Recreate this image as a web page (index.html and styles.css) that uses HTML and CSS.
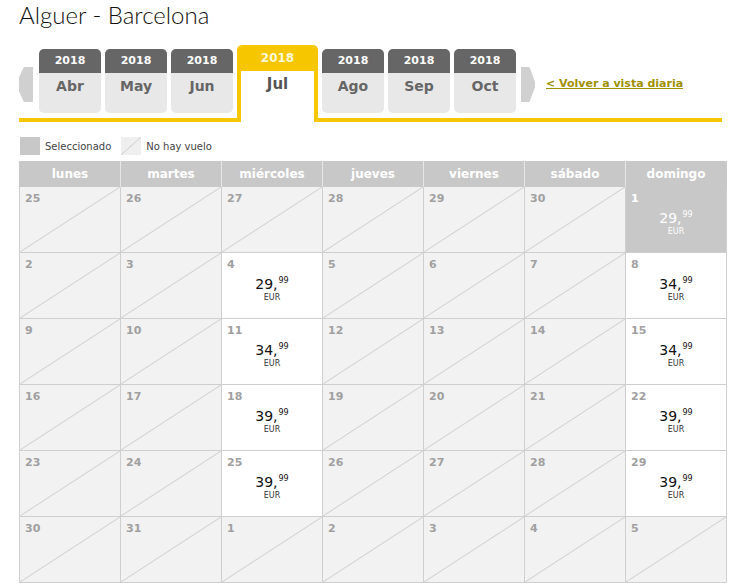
FILE: index.html
```html
<!DOCTYPE html>
<html lang="es">
<head>
<meta charset="utf-8">
<title>Alguer - Barcelona</title>
<link rel="stylesheet" href="styles.css">
</head>
<body>
<div class="page">
  <h1 class="title">Alguer - Barcelona</h1>

  <div class="months">
    <div class="arrow arrow-prev"></div>
    <div class="tab"><div class="tab-year">2018</div><div class="tab-month">Abr</div></div>
    <div class="tab"><div class="tab-year">2018</div><div class="tab-month">May</div></div>
    <div class="tab"><div class="tab-year">2018</div><div class="tab-month">Jun</div></div>
    <div class="tab tab-active"><div class="tab-year">2018</div><div class="tab-month">Jul</div></div>
    <div class="tab"><div class="tab-year">2018</div><div class="tab-month">Ago</div></div>
    <div class="tab"><div class="tab-year">2018</div><div class="tab-month">Sep</div></div>
    <div class="tab"><div class="tab-year">2018</div><div class="tab-month">Oct</div></div>
    <div class="arrow arrow-next"></div>
    <a class="back-link" href="#">&lt; Volver a vista diaria</a>
  </div>

  <div class="legend">
    <span class="legend-box legend-selected"></span>
    <span class="legend-text">Seleccionado</span>
    <span class="legend-box legend-nofly"></span>
    <span class="legend-text">No hay vuelo</span>
  </div>

  <div class="calendar">
    <div class="cal-head">
      <div class="head-cell">lunes</div>
      <div class="head-cell">martes</div>
      <div class="head-cell">miércoles</div>
      <div class="head-cell">jueves</div>
      <div class="head-cell">viernes</div>
      <div class="head-cell">sábado</div>
      <div class="head-cell">domingo</div>
    </div>
    <div class="cal-body">
      <div class="cell nofly"><div class="day">25</div></div>
      <div class="cell nofly"><div class="day">26</div></div>
      <div class="cell nofly"><div class="day">27</div></div>
      <div class="cell nofly"><div class="day">28</div></div>
      <div class="cell nofly"><div class="day">29</div></div>
      <div class="cell nofly"><div class="day">30</div></div>
      <div class="cell selected"><div class="day">1</div><div class="price"><span class="amt">29,</span><span class="cents">99</span></div><div class="cur">EUR</div></div>

      <div class="cell nofly"><div class="day">2</div></div>
      <div class="cell nofly"><div class="day">3</div></div>
      <div class="cell avail"><div class="day">4</div><div class="price"><span class="amt">29,</span><span class="cents">99</span></div><div class="cur">EUR</div></div>
      <div class="cell nofly"><div class="day">5</div></div>
      <div class="cell nofly"><div class="day">6</div></div>
      <div class="cell nofly"><div class="day">7</div></div>
      <div class="cell avail"><div class="day">8</div><div class="price"><span class="amt">34,</span><span class="cents">99</span></div><div class="cur">EUR</div></div>

      <div class="cell nofly"><div class="day">9</div></div>
      <div class="cell nofly"><div class="day">10</div></div>
      <div class="cell avail"><div class="day">11</div><div class="price"><span class="amt">34,</span><span class="cents">99</span></div><div class="cur">EUR</div></div>
      <div class="cell nofly"><div class="day">12</div></div>
      <div class="cell nofly"><div class="day">13</div></div>
      <div class="cell nofly"><div class="day">14</div></div>
      <div class="cell avail"><div class="day">15</div><div class="price"><span class="amt">34,</span><span class="cents">99</span></div><div class="cur">EUR</div></div>

      <div class="cell nofly"><div class="day">16</div></div>
      <div class="cell nofly"><div class="day">17</div></div>
      <div class="cell avail"><div class="day">18</div><div class="price"><span class="amt">39,</span><span class="cents">99</span></div><div class="cur">EUR</div></div>
      <div class="cell nofly"><div class="day">19</div></div>
      <div class="cell nofly"><div class="day">20</div></div>
      <div class="cell nofly"><div class="day">21</div></div>
      <div class="cell avail"><div class="day">22</div><div class="price"><span class="amt">39,</span><span class="cents">99</span></div><div class="cur">EUR</div></div>

      <div class="cell nofly"><div class="day">23</div></div>
      <div class="cell nofly"><div class="day">24</div></div>
      <div class="cell avail"><div class="day">25</div><div class="price"><span class="amt">39,</span><span class="cents">99</span></div><div class="cur">EUR</div></div>
      <div class="cell nofly"><div class="day">26</div></div>
      <div class="cell nofly"><div class="day">27</div></div>
      <div class="cell nofly"><div class="day">28</div></div>
      <div class="cell avail"><div class="day">29</div><div class="price"><span class="amt">39,</span><span class="cents">99</span></div><div class="cur">EUR</div></div>

      <div class="cell nofly"><div class="day">30</div></div>
      <div class="cell nofly"><div class="day">31</div></div>
      <div class="cell nofly"><div class="day">1</div></div>
      <div class="cell nofly"><div class="day">2</div></div>
      <div class="cell nofly"><div class="day">3</div></div>
      <div class="cell nofly"><div class="day">4</div></div>
      <div class="cell nofly"><div class="day">5</div></div>
    </div>
  </div>
</div>
</body>
</html>
```

FILE: styles.css
```css
* { box-sizing: border-box; }

body {
  margin: 0;
  background: #ffffff;
  font-family: "DejaVu Sans", Verdana, sans-serif;
  color: #333333;
}

.page {
  padding-left: 19px;
  width: 730px;
}

.title {
  margin: 0;
  height: 45px;
  font-family: "Lato", "Open Sans", sans-serif;
  font-weight: 300;
  font-size: 24px;
  line-height: 30px;
  color: #111111;
}

/* month tabs */
.months {
  width: 703px;
  height: 77px;
  display: flex;
  align-items: flex-end;
  border-bottom: 4px solid #f6c600;
}

.arrow {
  width: 14px;
  height: 35px;
  background: #d0d0d0;
  margin-bottom: 16px;
  flex: none;
}

.arrow-prev {
  margin-right: 6px;
  clip-path: polygon(35% 0, 100% 0, 100% 100%, 35% 100%, 0 70%, 0 30%);
}

.arrow-next {
  margin-left: 5px;
  margin-right: 11px;
  clip-path: polygon(0 0, 60% 0, 100% 42%, 100% 58%, 60% 100%, 0 100%);
}

.tab {
  flex: none;
  width: 62px;
  height: 64px;
  margin-bottom: 5px;
  margin-right: 4px;
  background: #e8e8e8;
  border-radius: 5px;
  overflow: hidden;
  text-align: center;
}

.tab:nth-last-of-type(2) { margin-right: 0; }

.tab-year {
  height: 24px;
  line-height: 24px;
  background: #666666;
  color: #ffffff;
  font-weight: bold;
  font-size: 11px;
}

.tab-month {
  padding-top: 5px;
  line-height: 16px;
  font-weight: bold;
  font-size: 14px;
  color: #666666;
}

.tab-active {
  width: 81px;
  height: 77px;
  margin-bottom: -4px;
  background: #ffffff;
  border-left: 4px solid #f6c600;
  border-right: 4px solid #f6c600;
  border-radius: 5px 5px 0 0;
}

.tab-active .tab-year {
  height: 26px;
  line-height: 26px;
  background: #f6c600;
  color: #fff8d8;
  font-size: 12px;
}

.tab-active .tab-month {
  font-size: 15px;
  color: #555555;
}

.back-link {
  margin-bottom: 27px;
  line-height: 14px;
  font-size: 11px;
  font-weight: bold;
  color: #9e9000;
  text-decoration: underline;
  white-space: nowrap;
}

/* legend */
.legend {
  display: flex;
  align-items: center;
  margin-top: 15px;
  padding-left: 1px;
  height: 18px;
}

.legend-box {
  width: 20px;
  height: 18px;
  flex: none;
}

.legend-selected { background: #c8c8c8; }

.legend-nofly {
  background: linear-gradient(to bottom right, #efefef calc(50% - 1px), #d4d4d4 50%, #efefef calc(50% + 1px));
}

.legend-text {
  margin-left: 5px;
  margin-right: 10px;
  font-size: 10px;
  color: #444444;
}

/* calendar */
.calendar {
  margin-top: 6px;
  width: 708px;
}

.cal-head {
  display: grid;
  grid-template-columns: repeat(7, 100px);
  column-gap: 1px;
  background: #e6e6e6;
  border-left: 1px solid #c8c8c8;
  border-right: 1px solid #c8c8c8;
}

.head-cell {
  height: 26px;
  line-height: 26px;
  background: #c8c8c8;
  color: #ffffff;
  font-weight: bold;
  font-size: 12px;
  text-align: center;
}

.cal-body {
  display: grid;
  grid-template-columns: repeat(7, 100px);
  grid-auto-rows: 65px;
  gap: 1px;
  background: #cfcfcf;
  border: 1px solid #cfcfcf;
  border-top: 0;
}

.cell {
  padding: 5px 0 0 5px;
  text-align: center;
}

.day {
  text-align: left;
  font-size: 11px;
  line-height: 14px;
  font-weight: bold;
  color: #a0a0a0;
}

.nofly {
  background: linear-gradient(to bottom right, #f2f2f2 calc(50% - 1px), #d2d2d2 50%, #f2f2f2 calc(50% + 1px));
}

.avail { background: #ffffff; }

.selected { background: #c8c8c8; }

.selected .day,
.selected .price,
.selected .cur { color: #ffffff; }

.price {
  display: flex;
  justify-content: center;
  align-items: flex-start;
  margin-top: 4px;
  margin-left: -5px;
  color: #111111;
}

.amt {
  font-size: 14px;
  line-height: 16px;
}

.cents {
  font-size: 8px;
  line-height: 10px;
  margin-left: 1px;
}

.cur {
  margin-left: -5px;
  margin-top: 1px;
  font-size: 8px;
  line-height: 10px;
  color: #333333;
}
```
